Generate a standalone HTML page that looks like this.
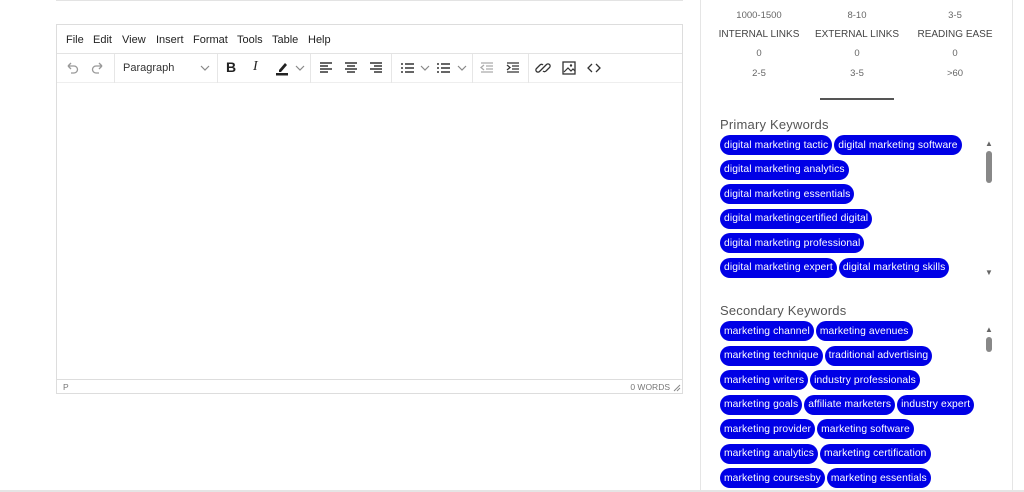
<!DOCTYPE html>
<html><head><style>
*{box-sizing:border-box;margin:0;padding:0}
body{width:1024px;height:492px;background:#fff;font-family:"Liberation Sans",sans-serif;position:relative;overflow:hidden}
.abs{position:absolute}
.ed{left:56px;top:24px;width:627px;height:370px;border:1px solid #ddd}
.menu{position:absolute;left:0;top:0;width:100%;height:29px;border-bottom:1px solid #e3e3e3;font-size:11px;color:#222}
.menu span{position:absolute;top:9px}
.tb{position:absolute;left:0;top:29px;width:100%;height:29px;border-bottom:1px solid #eee}
.sep{position:absolute;top:0;width:1px;height:29px;background:#e6e6e6}
.ic{position:absolute;top:6px;width:16px;height:16px}
.status{position:absolute;left:0;bottom:0;width:100%;height:14px;border-top:1px solid #ddd;font-size:8.5px;color:#777}
.rp{left:700px;top:0;width:313px;height:490px;border-left:1px solid #e5e5e5;border-right:1px solid #e5e5e5}
.st{position:absolute;font-size:9.5px;color:#666;text-align:center;width:100px}
.h{position:absolute;left:19px;font-size:13px;color:#555;letter-spacing:.2px}
.chips{position:absolute;left:19px;width:260px;overflow:hidden}
.row{height:24.5px;white-space:nowrap;display:flex}
.c{display:inline-flex;align-items:center;background:#0000e6;color:#fff;font-size:10.3px;height:20px;padding:0 4px;border-radius:10px;margin-right:2px;letter-spacing:.1px}
.sb{position:absolute;left:284px;width:8px}
</style></head><body>
<div class="abs" style="left:56px;top:0;width:627px;height:1px;background:#e3e3e3"></div>
<div class="abs ed">
 <div class="menu"><span style="left:9px">File</span><span style="left:36px">Edit</span><span style="left:65px">View</span><span style="left:99px">Insert</span><span style="left:136px">Format</span><span style="left:180px">Tools</span><span style="left:215px">Table</span><span style="left:251px">Help</span></div>
 <div class="tb">
  <svg class="ic" style="left:7px" viewBox="0 0 16 16"><path d="M4 6h6a3.5 3.5 0 010 7H7M4 6l3-3M4 6l3 3" fill="none" stroke="#999" stroke-width="1.3"/></svg>
  <svg class="ic" style="left:33px" viewBox="0 0 16 16"><path d="M12 6H6a3.5 3.5 0 000 7h3M12 6L9 3M12 6L9 9" fill="none" stroke="#999" stroke-width="1.3"/></svg>
  <div class="sep" style="left:57px"></div>
  <span style="position:absolute;left:66px;top:8px;font-size:11px;color:#333">Paragraph</span>
  <svg class="ic" style="left:140px" viewBox="0 0 16 16"><path d="M4 6l4 4 4-4" fill="none" stroke="#888" stroke-width="1.2"/></svg>
  <div class="sep" style="left:160px"></div>
  <span style="position:absolute;left:169px;top:5px;font-size:14px;font-weight:bold;color:#222">B</span>
  <span style="position:absolute;left:196px;top:5px;font-size:14px;font-style:italic;font-family:'Liberation Serif';color:#222">I</span>
  <svg class="ic" style="left:217px" viewBox="0 0 16 16"><path d="M5 10l6-7 2 2-6 7H5z" fill="#222"/><rect x="2" y="13" width="12" height="2.5" fill="#222"/></svg>
  <svg class="ic" style="left:235px" viewBox="0 0 16 16"><path d="M4 6l4 4 4-4" fill="none" stroke="#888" stroke-width="1.2"/></svg>
  <div class="sep" style="left:253px"></div>
  <svg class="ic" style="left:261px" viewBox="0 0 16 16"><path d="M2 3h12M2 6h8M2 9h12M2 12h8" stroke="#333" stroke-width="1.4"/></svg>
  <svg class="ic" style="left:286px" viewBox="0 0 16 16"><path d="M2 3h12M4 6h8M2 9h12M4 12h8" stroke="#333" stroke-width="1.4"/></svg>
  <svg class="ic" style="left:311px" viewBox="0 0 16 16"><path d="M2 3h12M6 6h8M2 9h12M6 12h8" stroke="#333" stroke-width="1.4"/></svg>
  <div class="sep" style="left:334px"></div>
  <svg class="ic" style="left:342px" viewBox="0 0 16 16"><path d="M2 4h2M6 4h9M2 8h2M6 8h9M2 12h2M6 12h9" stroke="#333" stroke-width="1.4"/></svg>
  <svg class="ic" style="left:360px" viewBox="0 0 16 16"><path d="M4 6l4 4 4-4" fill="none" stroke="#888" stroke-width="1.2"/></svg>
  <svg class="ic" style="left:378px" viewBox="0 0 16 16"><path d="M2 4h2M6 4h9M2 8h2M6 8h9M2 12h2M6 12h9" stroke="#333" stroke-width="1.4"/></svg>
  <svg class="ic" style="left:397px" viewBox="0 0 16 16"><path d="M4 6l4 4 4-4" fill="none" stroke="#888" stroke-width="1.2"/></svg>
  <div class="sep" style="left:415px"></div>
  <svg class="ic" style="left:422px" viewBox="0 0 16 16"><path d="M2 3h12M7 6h7M7 9h7M2 12h12M5 5L2 7.5 5 10" stroke="#aaa" stroke-width="1.3" fill="none"/></svg>
  <svg class="ic" style="left:448px" viewBox="0 0 16 16"><path d="M2 3h12M7 6h7M7 9h7M2 12h12M2 5l3 2.5L2 10" stroke="#333" stroke-width="1.3" fill="none"/></svg>
  <div class="sep" style="left:471px"></div>
  <svg class="ic" style="left:478px" viewBox="0 0 16 16"><path d="M7 9l-2.5 2.5a2 2 0 01-3-3L5 5a2 2 0 013 0M9 7l2.5-2.5a2 2 0 013 3L11 11a2 2 0 01-3 0M6 10l4-4" stroke="#333" stroke-width="1.3" fill="none"/></svg>
  <svg class="ic" style="left:504px" viewBox="0 0 16 16"><rect x="2" y="2" width="12" height="12" fill="none" stroke="#333" stroke-width="1.3"/><path d="M3 12l4-4 3 3 2-2 2 2" stroke="#333" stroke-width="1.2" fill="none"/><circle cx="10" cy="5.5" r="1.2" fill="#333"/></svg>
  <svg class="ic" style="left:529px" viewBox="0 0 16 16"><path d="M6 4L2 8l4 4M10 4l4 4-4 4" stroke="#333" stroke-width="1.3" fill="none"/></svg>
 </div>
 <div class="status"><span style="position:absolute;left:6px;top:2px">P</span><span style="position:absolute;right:12px;top:2px">0 WORDS</span><svg style="position:absolute;right:1px;top:4px" width="8" height="8"><path d="M7 1L1 7M7 4L4 7" stroke="#888"/></svg></div>
</div>

<div class="abs rp">
 <div class="st" style="left:8px;top:10px">1000-1500</div>
 <div class="st" style="left:106px;top:10px">8-10</div>
 <div class="st" style="left:204px;top:10px">3-5</div>
 <div class="st" style="left:8px;top:29px;font-size:10px;color:#444">INTERNAL LINKS</div>
 <div class="st" style="left:106px;top:29px;font-size:10px;color:#444">EXTERNAL LINKS</div>
 <div class="st" style="left:204px;top:29px;font-size:10px;color:#444">READING EASE</div>
 <div class="st" style="left:8px;top:48px">0</div>
 <div class="st" style="left:106px;top:48px">0</div>
 <div class="st" style="left:204px;top:48px">0</div>
 <div class="st" style="left:8px;top:68px">2-5</div>
 <div class="st" style="left:106px;top:68px">3-5</div>
 <div class="st" style="left:204px;top:68px">&gt;60</div>
 <div style="position:absolute;left:119px;top:98px;width:74px;height:2px;background:#555"></div>
 <div class="h" style="top:117px">Primary Keywords</div>
 <div class="chips" style="top:135px;height:146px">
  <div class="row"><span class="c">digital marketing tactic</span><span class="c">digital marketing software</span></div>
  <div class="row"><span class="c">digital marketing analytics</span></div>
  <div class="row"><span class="c">digital marketing essentials</span></div>
  <div class="row"><span class="c">digital marketingcertified digital</span></div>
  <div class="row"><span class="c">digital marketing professional</span></div>
  <div class="row"><span class="c">digital marketing expert</span><span class="c">digital marketing skills</span></div>
  <div class="row"><span class="c" style="margin-left:5px">digital marketing xxxx</span><span class="c">digital marketing xxxxx</span></div>
 </div>
 <div class="sb" style="top:139px;color:#666;font-size:8px">▲</div>
 <div class="sb" style="top:151px;height:32px;background:#888;border-radius:4px;left:285px;width:6px"></div>
 <div class="sb" style="top:268px;color:#666;font-size:8px">▼</div>
 <div class="h" style="top:303px">Secondary Keywords</div>
 <div class="chips" style="top:321px;height:170px;width:270px">
  <div class="row"><span class="c">marketing channel</span><span class="c">marketing avenues</span></div>
  <div class="row"><span class="c">marketing technique</span><span class="c">traditional advertising</span></div>
  <div class="row"><span class="c">marketing writers</span><span class="c">industry professionals</span></div>
  <div class="row"><span class="c">marketing goals</span><span class="c">affiliate marketers</span><span class="c">industry expert</span></div>
  <div class="row"><span class="c">marketing provider</span><span class="c">marketing software</span></div>
  <div class="row"><span class="c">marketing analytics</span><span class="c">marketing certification</span></div>
  <div class="row"><span class="c">marketing coursesby</span><span class="c">marketing essentials</span></div>
 </div>
 <div class="sb" style="top:325px;color:#666;font-size:8px">▲</div>
 <div class="sb" style="top:337px;height:15px;background:#888;border-radius:4px;left:285px;width:6px"></div>
</div>
<div class="abs" style="left:0;top:490px;width:1024px;height:2px;background:#e5e5e5"></div>
</body></html>
